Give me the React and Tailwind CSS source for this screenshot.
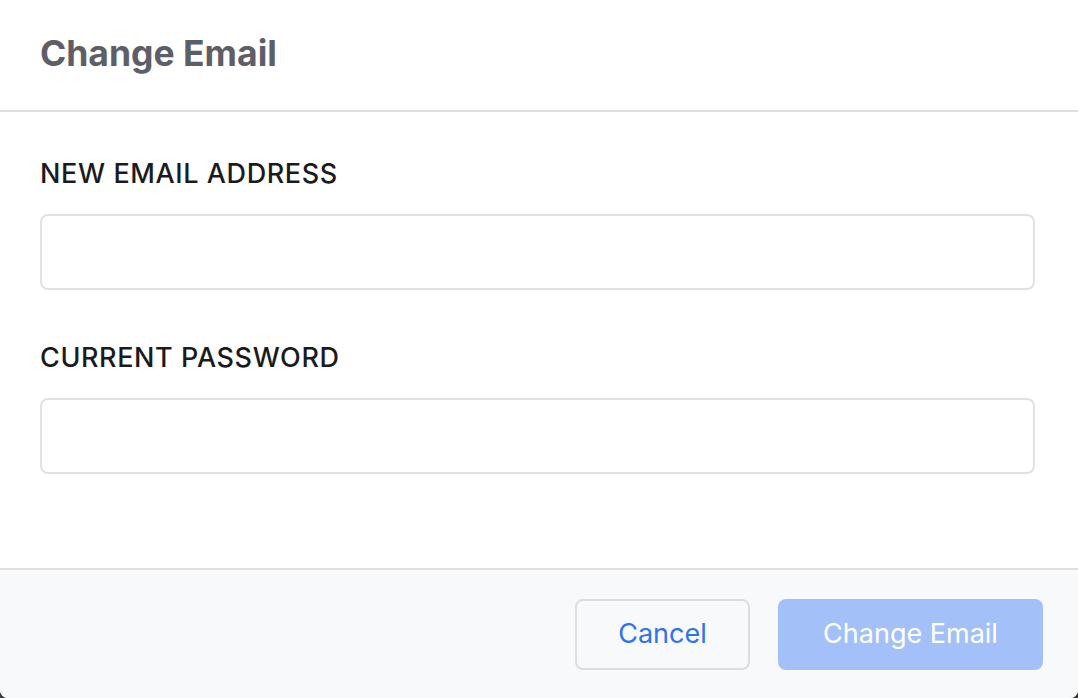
import React from 'react';

const Field = ({ label, type }) => (
  <div className="flex flex-col">
    <label className="h-[30px] text-[27px] leading-[30px] font-medium text-[#1b1b1d] tracking-[0.6px]">
      {label}
    </label>
    <input
      type={type}
      className="mt-[25px] h-[76px] w-full rounded-[8px] border-2 border-[#e1e1e3] bg-white px-4 text-[22px] outline-none"
    />
  </div>
);

export default function App() {
  return (
    <div className="h-[698px] w-[1078px] bg-[#3a3a3c] font-['Inter',sans-serif]">
      <div className="flex h-full w-full flex-col overflow-hidden rounded-b-[8px] bg-white">
        <header className="flex h-[112px] shrink-0 items-center px-10 border-b-2 border-[#e0e0e2]">
          <h1 className="-mt-[2px] text-[35.5px] font-bold text-[#5d5e66]">Change Email</h1>
        </header>

        <div className="flex flex-1 flex-col gap-[53px] pl-10 pr-[43px] pt-[47px]">
          <Field label="NEW EMAIL ADDRESS" type="email" />
          <Field label="CURRENT PASSWORD" type="password" />
        </div>

        <footer className="flex h-[130px] shrink-0 items-center justify-end gap-7 border-t-2 border-[#e0e0e2] bg-[#f8f9fa] pr-[35px]">
          <button className="h-[71px] w-[175px] rounded-[8px] border-2 border-[#dcdde0] bg-[#f8f9fa] text-[27px] text-[#2d72f0]">
            Cancel
          </button>
          <button className="h-[71px] w-[265px] rounded-[8px] bg-[#a3c1f8] text-[27px] text-white">
            Change Email
          </button>
        </footer>
      </div>
    </div>
  );
}
